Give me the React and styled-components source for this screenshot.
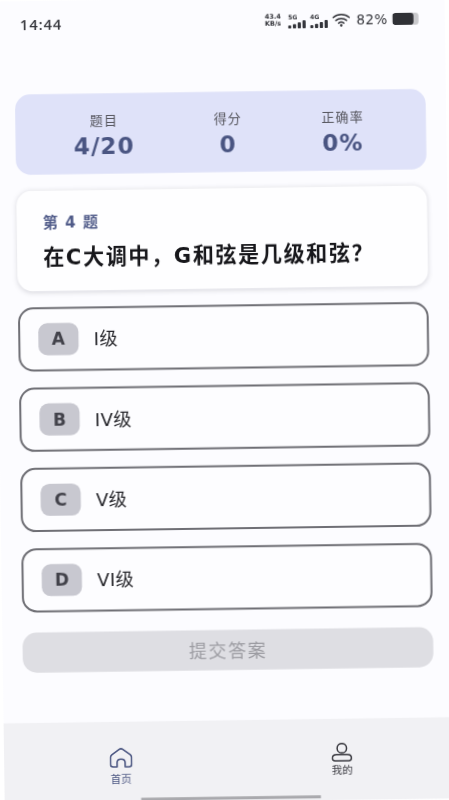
import React from "react"
import styled, { createGlobalStyle } from "styled-components"

const stats = [
  { label: "题目", value: "4/20" },
  { label: "得分", value: "0" },
  { label: "正确率", value: "0%" },
]

const options = [
  { key: "A", text: "I级" },
  { key: "B", text: "IV级" },
  { key: "C", text: "V级" },
  { key: "D", text: "VI级" },
]

const SignalIcon = ({ tag }) => (
  <Signal>
    <small>{tag}</small>
    <svg width="18" height="8" viewBox="0 0 18 8" fill="#33343a">
      <rect x="0" y="5" width="3.2" height="3" rx="1" />
      <rect x="4.8" y="3.6" width="3.2" height="4.4" rx="1" />
      <rect x="9.6" y="1.8" width="3.2" height="6.2" rx="1" />
      <rect x="14.4" y="0" width="3.2" height="8" rx="1" />
    </svg>
  </Signal>
)

const WifiIcon = () => (
  <svg width="18" height="14" viewBox="0 0 19 14" fill="none" stroke="#33343a" strokeWidth="1.5" strokeLinecap="round">
    <path d="M1 4.6C5.8 .4 13.2 .4 18 4.6" />
    <path d="M3.9 7.6C7 4.9 12 4.9 15.1 7.6" />
    <path d="M6.7 10.5C8.3 9.2 10.7 9.2 12.3 10.5" />
    <circle cx="9.5" cy="12.8" r=".6" fill="#33343a" />
  </svg>
)

const HomeIcon = () => (
  <svg width="23" height="20" viewBox="0 0 23 20" fill="none" stroke="#4c5782" strokeWidth="1.6" strokeLinecap="round" strokeLinejoin="round">
    <path d="M7.5 18.9H3.6C2 18.9 1 17.9 1 16.4V9.5C1 8.3 1.5 7.5 2.3 6.8L9.5 1.6C10.8 .7 12.2 .7 13.5 1.6L20.7 6.8C21.5 7.5 22 8.3 22 9.5V16.4C22 17.9 21 18.9 19.4 18.9H15.5V14.8C15.5 12.6 14 11.2 11.5 11.2C9 11.2 7.5 12.6 7.5 14.8V18.9Z" />
  </svg>
)

const UserIcon = () => (
  <svg width="21" height="19" viewBox="0 0 21 19" fill="none" stroke="#3a3a40" strokeWidth="1.5" strokeLinecap="round" strokeLinejoin="round">
    <circle cx="10.5" cy="5.4" r="4.7" />
    <path d="M5.2 11.8H15.8C18.2 11.8 20 13.3 20 15.3C20 17 19 18 17.4 18H3.6C2 18 1 17 1 15.3C1 13.3 2.8 11.8 5.2 11.8Z" />
  </svg>
)

const App = () => {
  return (
    <>
      <GlobalStyle />
      <Screen>
        <StatusBar>
          <Clock>14:44</Clock>
          <StatusIcons>
            <Speed>
              43.4
              <br />
              KB/s
            </Speed>
            <SignalIcon tag="5G" />
            <SignalIcon tag="4G" />
            <WifiIcon />
            <Battery>82%</Battery>
            <BatteryIcon>
              <BatteryFill />
            </BatteryIcon>
          </StatusIcons>
        </StatusBar>

        <Main>
          <StatsCard>
            {stats.map((s) => (
              <Stat key={s.label}>
                <StatLabel>{s.label}</StatLabel>
                <StatValue>{s.value}</StatValue>
              </Stat>
            ))}
          </StatsCard>

          <QuestionCard>
            <QuestionNo>第 4 题</QuestionNo>
            <QuestionText>在C大调中，G和弦是几级和弦？</QuestionText>
          </QuestionCard>

          <OptionList>
            {options.map((o) => (
              <Option key={o.key}>
                <OptionKey>{o.key}</OptionKey>
                <OptionText>{o.text}</OptionText>
              </Option>
            ))}
          </OptionList>

          <SubmitButton disabled>提交答案</SubmitButton>
        </Main>

        <TabBar>
          <TabItem $drop={1.5} $inset={8} $gap={4}>
            <HomeIcon />
            <TabLabel $active>首页</TabLabel>
          </TabItem>
          <TabItem $drop={0} $inset={0} $gap={1}>
            <UserIcon />
            <TabLabel>我的</TabLabel>
          </TabItem>
          <HomeIndicator />
        </TabBar>
      </Screen>
    </>
  )
}

export default App

const GlobalStyle = createGlobalStyle`
  html, body {
    margin: 0;
    padding: 0;
    width: 449px;
    height: 800px;
    overflow: hidden;
    background: #ffffff;
  }
  * {
    box-sizing: border-box;
  }
`

const Screen = styled.div`
  position: relative;
  width: 449px;
  height: 800px;
  display: flex;
  flex-direction: column;
  background: #fcfcff;
  font-family: "DejaVu Sans", "Noto Sans CJK SC", sans-serif;
  transform: rotate(-0.8deg) scale(1.004);
  filter: blur(0.35px);
`

const StatusBar = styled.div`
  height: 44px;
  padding: 13px 26px 0 26px;
  display: flex;
  justify-content: space-between;
  align-items: flex-start;
  color: #33343a;
`

const Clock = styled.div`
  font-family: "Open Sans", sans-serif;
  font-size: 14.5px;
  font-weight: 600;
  letter-spacing: 1px;
  line-height: 20px;
  margin-top: 1px;
`

const StatusIcons = styled.div`
  display: flex;
  align-items: center;
  gap: 4px;
  height: 20px;
`

const Speed = styled.div`
  margin-right: 3px;
  font-size: 6.5px;
  font-weight: 700;
  line-height: 7.5px;
  text-align: center;
`

const Signal = styled.div`
  display: flex;
  flex-direction: column;
  align-items: flex-start;

  small {
    font-size: 6px;
    font-weight: 700;
    line-height: 7px;
  }
`

const Battery = styled.div`
  margin: 0 1px 0 2px;
  font-size: 13.5px;
  letter-spacing: 0.3px;
`

const BatteryIcon = styled.div`
  width: 26px;
  height: 12px;
  border-radius: 3px;
  background: #c9c9cc;
  overflow: hidden;
`

const BatteryFill = styled.div`
  width: 82%;
  height: 100%;
  background: #303136;
  border-radius: 3px;
`

const Main = styled.main`
  flex: 1;
  padding: 49px 20px 0;
  display: flex;
  flex-direction: column;
`

const StatsCard = styled.section`
  height: 80px;
  padding: 6px 62px 0 58px;
  display: flex;
  justify-content: space-between;
  align-items: center;
  border-radius: 15px;
  background: #dfe2f9;
`

const Stat = styled.div`
  display: flex;
  flex-direction: column;
  align-items: center;
`

const StatLabel = styled.div`
  font-size: 13px;
  line-height: 18px;
  color: #56565e;
  letter-spacing: 1px;
`

const StatValue = styled.div`
  font-size: 23px;
  font-weight: 700;
  line-height: 31px;
  color: #4a5582;
  letter-spacing: 1px;
`

const QuestionCard = styled.section`
  margin-top: 16px;
  height: 100px;
  padding: 22px 26px 0;
  border-radius: 15px;
  background: #fefeff;
  box-shadow: 0 1px 5px rgba(60, 60, 80, 0.18);
`

const QuestionNo = styled.div`
  font-size: 15px;
  font-weight: 700;
  line-height: 20px;
  color: #4f5a88;
  letter-spacing: 1px;
`

const QuestionText = styled.h2`
  margin: 12px 0 0;
  font-size: 21px;
  font-weight: 700;
  line-height: 26px;
  color: #17171b;
  letter-spacing: 1.6px;
  white-space: nowrap;
`

const OptionList = styled.div`
  margin-top: 16px;
  display: flex;
  flex-direction: column;
  gap: 16px;
`

const Option = styled.div`
  height: 64px;
  padding: 0 18px;
  display: flex;
  align-items: center;
  gap: 15px;
  border: 2px solid #6f6f75;
  border-radius: 15px;
  background: #fdfdff;
`

const OptionKey = styled.div`
  width: 40px;
  height: 32px;
  display: flex;
  align-items: center;
  justify-content: center;
  border-radius: 9px;
  background: #c8c8d0;
  color: #42424a;
  font-size: 17px;
  font-weight: 700;
`

const OptionText = styled.div`
  padding-bottom: 2px;
  font-size: 18px;
  color: #26262b;
  letter-spacing: 0.5px;
`

const SubmitButton = styled.button`
  margin-top: 20px;
  height: 40px;
  padding: 0 0 2px;
  border: none;
  border-radius: 14px;
  background: #dedee3;
  color: #9c9ca2;
  font-family: inherit;
  font-size: 18px;
  letter-spacing: 1.5px;
`

const TabBar = styled.nav`
  position: relative;
  height: 81px;
  padding: 24px 0 0;
  display: grid;
  grid-template-columns: 1fr 1fr;
  background: #f1f1f4;
`

const TabItem = styled.div`
  display: flex;
  flex-direction: column;
  align-items: center;
  gap: ${(p) => p.$gap}px;
  padding-top: ${(p) => p.$drop}px;
  padding-left: ${(p) => p.$inset}px;
`

const TabLabel = styled.span`
  font-size: 10.5px;
  line-height: 14px;
  color: ${(p) => (p.$active ? "#4c5782" : "#3a3a40")};
`

const HomeIndicator = styled.div`
  position: absolute;
  left: 136px;
  bottom: 2px;
  width: 179px;
  height: 3px;
  background: #a9a9ad;
`
